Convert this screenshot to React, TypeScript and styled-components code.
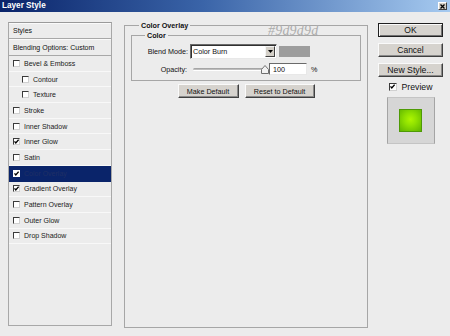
import React from "react";
import styled, { createGlobalStyle } from "styled-components";

const GlobalStyle = createGlobalStyle`
  html, body { margin: 0; padding: 0; background: #ececec; }
  body {
    width: 450px; height: 336px; overflow: hidden;
    font-family: "Liberation Sans", Arial, sans-serif;
    color: #111;
  }
  * { box-sizing: border-box; }
`;

const Window = styled.div`
  width: 450px;
  height: 336px;
  background: #ececec;
  display: flex;
  flex-direction: column;
`;

const TitleBar = styled.div`
  height: 12px;
  background: linear-gradient(to right, #0a246a 0%, #3a64a8 45%, #a6caf0 100%);
  display: flex;
  align-items: center;
  justify-content: space-between;
  padding: 0 3px 0 2px;
`;

const Title = styled.span`
  color: #fff;
  font-weight: bold;
  font-size: 8.2px;
  line-height: 12px;
`;

const CloseButton = styled.div`
  width: 9px;
  height: 8px;
  background: #d4d0c8;
  border: 1px solid;
  border-color: #fff #404040 #404040 #fff;
  display: flex;
  align-items: center;
  justify-content: center;
`;

const Body = styled.div`
  display: flex;
  align-items: flex-start;
  padding: 10px 0 0 8px;
`;

const StylesPanel = styled.div`
  width: 104px;
  height: 304px;
  border: 1px solid #a8a8a8;
  border-top-color: #9a9a9a;
  display: flex;
  flex-direction: column;
  margin-right: 12px;
`;

const PanelHeader = styled.div<{ $h: number }>`
  height: ${(p) => p.$h}px;
  border-bottom: 1px solid #a8a8a8;
  box-shadow: inset 0 1px 0 #fafafa;
  padding-left: 4px;
  font-size: 7px;
  display: flex;
  align-items: center;
`;

const StyleRow = styled.div<{ $nested?: boolean; $selected?: boolean }>`
  height: 15.7px;
  flex: none;
  display: flex;
  align-items: center;
  gap: 4px;
  padding-left: ${(p) => (p.$nested ? 13 : 4)}px;
  border-bottom: 1px solid ${(p) => (p.$selected ? "#0a246a" : "#f8f8f8")};
  background: ${(p) => (p.$selected ? "#0a246a" : "transparent")};
  color: ${(p) => (p.$selected ? "#1f2f66" : "#1a1a1a")};
  font-size: 7px;
`;

const Box = styled.span<{ $light?: boolean }>`
  width: 7px;
  height: 7px;
  flex: none;
  background: #fff;
  border: 1px solid;
  border-color: ${(p) => (p.$light ? "#fff" : "#3a3a3a #d0d0d0 #d0d0d0 #3a3a3a")};
  display: flex;
  align-items: center;
  justify-content: center;
`;

const Check = ({ on, light, size }: { on?: boolean; light?: boolean; size?: number }) => (
  <Box $light={light} style={size ? { width: size, height: size } : undefined}>
    {on && (
      <svg width="5" height="5" viewBox="0 0 5 5">
        <polyline points="0.5,2.3 1.8,3.9 4.6,0.6" fill="none" stroke="#000" strokeWidth="1.3" />
      </svg>
    )}
  </Box>
);

const Main = styled.div`
  position: relative;
  width: 244px;
  margin-top: -1px;
`;

const Group = styled.fieldset<{ $h?: number }>`
  margin: 0;
  border: 1px solid #a6a6a6;
  padding: 0 6px;
  height: ${(p) => (p.$h ? `${p.$h}px` : "auto")};
  display: flex;
  flex-direction: column;
  min-width: 0;
`;

const InnerGroup = styled.fieldset`
  margin: 1px 0 0 0;
  border: 1px solid #a6a6a6;
  padding: 4px 0 5px 0;
  min-width: 0;
`;

const Legend = styled.legend<{ $ml: number }>`
  font-weight: bold;
  font-size: 7.2px;
  line-height: 9px;
  padding: 0 2px;
  margin-left: ${(p) => p.$ml}px;
`;

const FormGrid = styled.div`
  display: grid;
  grid-template-columns: 56px auto;
  column-gap: 2px;
  row-gap: 4px;
  align-items: center;
`;

const FieldLabel = styled.span<{ $pr?: number }>`
  font-size: 7.2px;
  text-align: right;
  padding-right: ${(p) => p.$pr ?? 0}px;
`;

const FieldRow = styled.div`
  display: flex;
  align-items: center;
`;

const Select = styled.div`
  width: 87px;
  height: 15px;
  background: #fff;
  border: 1px solid;
  border-color: #6a6a6a #e8e8e8 #e8e8e8 #6a6a6a;
  box-shadow: inset 1px 1px 0 #303030;
  display: flex;
  align-items: stretch;
  padding: 1px 1px 1px 2px;
`;

const SelectText = styled.span`
  flex: 1;
  font-size: 7.2px;
  display: flex;
  align-items: center;
`;

const DropButton = styled.span`
  width: 10px;
  background: #d4d0c8;
  border: 1px solid;
  border-color: #f4f4f4 #404040 #404040 #f4f4f4;
  display: flex;
  align-items: center;
  justify-content: center;
`;

const Swatch = styled.div<{ $c: string }>`
  width: 31px;
  height: 11px;
  margin-left: 2px;
  background: ${(p) => p.$c};
`;

const Slider = styled.div`
  position: relative;
  width: 79px;
  height: 12px;
  display: flex;
  align-items: center;
  padding: 0 4px 0 3px;
`;

const Track = styled.div`
  flex: 1;
  height: 3px;
  border-radius: 2px;
  background: linear-gradient(#9a9a9a, #c8c8c8);
  border-bottom: 1px solid #fff;
`;

const Thumb = styled.svg`
  position: absolute;
  left: 71px;
  top: 2px;
`;

const NumberBox = styled.div`
  width: 38px;
  height: 12px;
  background: #fff;
  border: 1px solid;
  border-color: #6a6a6a #e8e8e8 #e8e8e8 #6a6a6a;
  font-size: 7.2px;
  padding-left: 3px;
  display: flex;
  align-items: center;
`;

const Unit = styled.span`
  font-size: 7.2px;
  margin-left: 4px;
`;

const ButtonRow = styled.div`
  display: flex;
  justify-content: center;
  gap: 6px;
  margin-top: 3px;
`;

const Button = styled.div<{ $w: number; $fs?: number; $default?: boolean }>`
  width: ${(p) => p.$w}px;
  height: 14px;
  background: #d6d3ce;
  border: 1px solid;
  border-color: ${(p) => (p.$default ? "#202020" : "#fafafa #404040 #404040 #fafafa")};
  box-shadow: ${(p) =>
    p.$default
      ? "inset 1px 1px 0 #fafafa, inset -1px -1px 0 #707070"
      : "inset -1px -1px 0 #8a8a8a"};
  font-size: ${(p) => p.$fs ?? 7.2}px;
  display: flex;
  align-items: center;
  justify-content: center;
  color: #111;
`;

const Watermark = styled.span`
  position: absolute;
  left: 144px;
  top: 3px;
  font-family: "Liberation Serif", "Times New Roman", serif;
  font-style: italic;
  font-size: 14px;
  line-height: 14px;
  color: #adadad;
  letter-spacing: 0.2px;
`;

const Side = styled.div`
  width: 65px;
  margin-left: 10px;
  padding-top: 1px;
  display: flex;
  flex-direction: column;
  align-items: center;
  gap: 6px;
`;

const PreviewRow = styled.div`
  display: flex;
  align-items: center;
  gap: 5px;
  height: 9px;
  margin-top: -1px;
  font-size: 8.7px;
`;

const PreviewBox = styled.div`
  width: 48px;
  height: 47px;
  background: #d6d6d6;
  border: 1px solid #c4c4c4;
  border-left-color: #a4a4a4;
  border-right-color: #a4a4a4;
  display: flex;
  align-items: center;
  justify-content: center;
`;

const GreenSquare = styled.div`
  width: 23px;
  height: 23px;
  border: 1px solid #4e9a05;
  background: radial-gradient(circle at 50% 45%, #aef500 0%, #8fe000 40%, #5fb400 100%);
`;

const items = [
  { label: "Bevel & Emboss" },
  { label: "Contour", nested: true },
  { label: "Texture", nested: true },
  { label: "Stroke" },
  { label: "Inner Shadow" },
  { label: "Inner Glow", checked: true },
  { label: "Satin" },
  { label: "Color Overlay", checked: true, selected: true },
  { label: "Gradient Overlay", checked: true },
  { label: "Pattern Overlay" },
  { label: "Outer Glow" },
  { label: "Drop Shadow" },
];

export default function App() {
  return (
    <Window>
      <GlobalStyle />
      <TitleBar>
        <Title>Layer Style</Title>
        <CloseButton>
          <svg width="5" height="5" viewBox="0 0 5 5">
            <path d="M0.5 0.5 L4.5 4.5 M4.5 0.5 L0.5 4.5" stroke="#000" strokeWidth="1.3" />
          </svg>
        </CloseButton>
      </TitleBar>
      <Body>
        <StylesPanel>
          <PanelHeader $h={16}>Styles</PanelHeader>
          <PanelHeader $h={17}>Blending Options: Custom</PanelHeader>
          {items.map((it) => (
            <StyleRow key={it.label} $nested={it.nested} $selected={it.selected}>
              <Check on={it.checked} light={it.selected} />
              <span>{it.label}</span>
            </StyleRow>
          ))}
        </StylesPanel>

        <Main>
          <Group $h={307}>
            <Legend $ml={8}>Color Overlay</Legend>
            <InnerGroup>
              <Legend $ml={13}>Color</Legend>
              <FormGrid>
                <FieldLabel>Blend Mode:</FieldLabel>
                <FieldRow>
                  <Select>
                    <SelectText>Color Burn</SelectText>
                    <DropButton>
                      <svg width="5" height="3" viewBox="0 0 5 3">
                        <polygon points="0,0 5,0 2.5,3" fill="#000" />
                      </svg>
                    </DropButton>
                  </Select>
                  <Swatch $c="#9d9d9d" />
                </FieldRow>
                <FieldLabel $pr={1}>Opacity:</FieldLabel>
                <FieldRow>
                  <Slider>
                    <Track />
                    <Thumb width="8" height="9" viewBox="0 0 8 9">
                      <polygon points="0.5,8.5 0.5,4.5 4,0.5 7.5,4.5 7.5,8.5" fill="#f2f2f2" stroke="#707070" strokeWidth="1" />
                    </Thumb>
                  </Slider>
                  <NumberBox>100</NumberBox>
                  <Unit>%</Unit>
                </FieldRow>
              </FormGrid>
            </InnerGroup>
            <ButtonRow>
              <Button $w={61}>Make Default</Button>
              <Button $w={70}>Reset to Default</Button>
            </ButtonRow>
          </Group>
          <Watermark>#9d9d9d</Watermark>
        </Main>

        <Side>
          <Button $w={65} $fs={8.5} $default>OK</Button>
          <Button $w={65} $fs={8.5}>Cancel</Button>
          <Button $w={65} $fs={8.7}>New Style...</Button>
          <PreviewRow>
            <Check on size={8} />
            <span>Preview</span>
          </PreviewRow>
          <PreviewBox>
            <GreenSquare />
          </PreviewBox>
        </Side>
      </Body>
    </Window>
  );
}
